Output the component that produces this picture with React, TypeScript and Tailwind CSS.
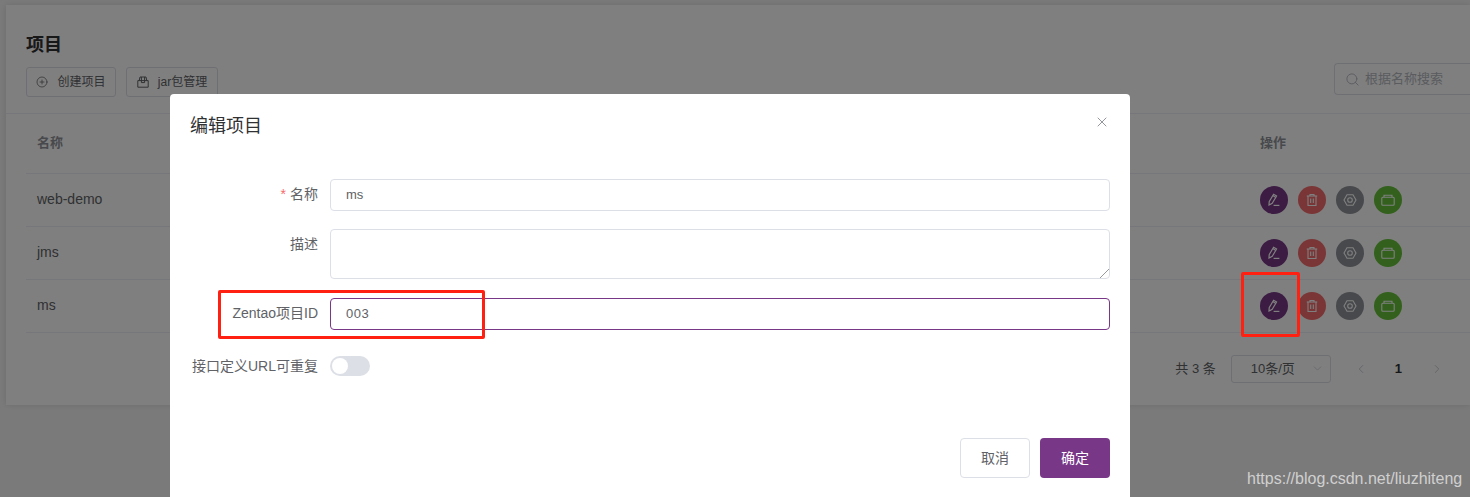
import { CirclePlus, Search, X, ChevronDown, ChevronLeft, ChevronRight } from "lucide-react";

const font = { fontFamily: '"Liberation Sans", "Noto Sans CJK SC", sans-serif' };

const rows = ["web-demo", "jms", "ms"];

function EditIcon() {
  return (
    <svg width="16" height="16" viewBox="0 0 16 16" fill="none" stroke="currentColor" strokeWidth="1.2">
      <path d="M3 13 3.2 9.6 7.6 2.2 10.6 4 6.2 11.4Z" />
      <path d="M6.8 3.6 9.8 5.4" />
      <path d="M7.6 13.4H13.4" />
    </svg>
  );
}

function TrashIcon() {
  return (
    <svg width="16" height="16" viewBox="0 0 16 16" fill="none" stroke="currentColor" strokeWidth="1.1">
      <path d="M2.8 4H13.2" />
      <path d="M6 4V2.5H10V4" />
      <path d="M4 4V13.5H12V4" />
      <path d="M6.7 6.5V11M9.3 6.5V11" />
    </svg>
  );
}

function GearIcon() {
  return (
    <svg width="16" height="16" viewBox="0 0 16 16" fill="none" stroke="currentColor" strokeWidth="1.1">
      <path d="M5 2.8H11L14 8 11 13.2H5L2 8Z" />
      <circle cx="8" cy="8" r="2.3" />
    </svg>
  );
}

function StackIcon() {
  return (
    <svg width="16" height="16" viewBox="0 0 16 16" fill="none" stroke="currentColor" strokeWidth="1.1">
      <path d="M4 5V3.2H12V5" />
      <rect x="1.8" y="5.2" width="12.4" height="8" rx="1" />
    </svg>
  );
}

function BoxIcon() {
  return (
    <svg width="12" height="12" viewBox="0 0 12 12" fill="none" stroke="currentColor" strokeWidth="1">
      <path d="M.8 4.6H11.2V11.2H.8Z" />
      <path d="M2.2 4.6 3 1H9L9.8 4.6" />
      <path d="M4.4 1V6.6H7.6V1" />
    </svg>
  );
}

function Actions() {
  return (
    <div className="flex gap-[10px]">
      <span className="flex h-7 w-7 items-center justify-center rounded-full bg-[#783887] text-white">
        <EditIcon />
      </span>
      <span className="flex h-7 w-7 items-center justify-center rounded-full bg-[#f56c6c] text-white">
        <TrashIcon />
      </span>
      <span className="flex h-7 w-7 items-center justify-center rounded-full bg-[#909399] text-white">
        <GearIcon />
      </span>
      <span className="flex h-7 w-7 items-center justify-center rounded-full bg-[#67c23a] text-white">
        <StackIcon />
      </span>
    </div>
  );
}

function ProjectPage() {
  return (
    <div className="h-[497px] bg-[#f5f5f5] pl-[6px] pt-[5px]">
      <div className="h-[400px] bg-white shadow-[0_0_6px_rgba(0,0,0,0.12)]">
        <div className="flex h-[109px] items-start justify-between border-b border-[#ebeef5] pl-5">
          <div>
            <h1 className="mt-[28px] text-lg font-bold leading-6 text-[#303133]">项目</h1>
            <div className="mt-[10px] flex gap-[10px]">
              <button className="flex h-[30px] w-[90px] items-center justify-center gap-[9px] rounded-[3px] border border-[#dcdfe6] text-xs text-[#606266]">
                <CirclePlus size={12} strokeWidth={1.5} />
                创建项目
              </button>
              <button className="flex h-[30px] w-[92px] items-center justify-center gap-[9px] rounded-[3px] border border-[#dcdfe6] text-xs text-[#606266]">
                <BoxIcon />
                jar包管理
              </button>
            </div>
          </div>
          <div className="mt-[58px] flex h-8 w-[136px] items-center gap-[5px] rounded-l border border-r-0 border-[#dcdfe6] pl-[10px] text-[13px] text-[#b4b8c0]">
            <Search size={15} strokeWidth={1.5} />
            根据名称搜索
          </div>
        </div>
        <div className="pl-5">
          <div className="flex h-[60px] items-center border-b border-[#ebeef5] pb-[2px] pl-[11px] text-[13px] font-bold text-[#909399]">
            <span className="flex-1">名称</span>
            <span className="w-[210px]">操作</span>
          </div>
          {rows.map((r) => (
            <div key={r} className="flex h-[53px] items-center border-b border-[#ebeef5] pl-[11px] text-sm text-[#606266]">
              <span className="flex-1 pb-[2px]">{r}</span>
              <div className="w-[210px]"><Actions /></div>
            </div>
          ))}
          <div className="flex h-[71px] items-center justify-end pr-[26px] text-[13px] text-[#606266]">
            <span>共 3 条</span>
            <div className="ml-[15px] flex h-7 w-[100px] items-center rounded-[3px] border border-[#dcdfe6] pl-[19px] pr-[6px]">
              <span className="flex-1">10条/页</span>
              <ChevronDown size={13} strokeWidth={1.25} className="text-[#c0c4cc]" />
            </div>
            <ChevronLeft size={14} strokeWidth={1.5} className="ml-[23px] text-[#c0c4cc]" />
            <span className="ml-[27px] font-bold text-[#303133]">1</span>
            <ChevronRight size={14} strokeWidth={1.5} className="ml-[28px] text-[#c0c4cc]" />
          </div>
        </div>
      </div>
    </div>
  );
}

function Field({ label, required, children }: { label: string; required?: boolean; children: React.ReactNode }) {
  return (
    <div className="flex">
      <label className="w-[140px] shrink-0 whitespace-nowrap pr-3 text-right text-sm leading-[30px] text-[#606266]">
        {required && <span className="mr-1 text-[#f56c6c]">*</span>}
        {label}
      </label>
      <div className="flex-1">{children}</div>
    </div>
  );
}

function EditDialog() {
  return (
    <div className="absolute left-[170px] top-[94px] h-[420px] w-[960px] rounded-sm bg-white px-5">
      <div className="flex h-[85px] items-start justify-between">
        <h2 className="mt-[20px] text-lg leading-[24px] text-[#303133]">编辑项目</h2>
        <X size={16} strokeWidth={1.25} className="mt-5 text-[#7d8188]" />
      </div>
      <Field label="名称" required>
        <div className="flex h-8 items-center rounded border border-[#dcdfe6] pl-[15px] text-[13px] text-[#606266]">ms</div>
      </Field>
      <div className="mt-[18px]">
        <Field label="描述">
          <div className="h-[50px] rounded border border-[#dcdfe6] bg-[linear-gradient(135deg,transparent_calc(100%-7px),#999_calc(100%-7px),#999_calc(100%-6px),transparent_calc(100%-6px))]" />
        </Field>
      </div>
      <div className="mt-[19px]">
        <Field label="Zentao项目ID">
          <div className="flex h-8 items-center rounded border border-[#783887] pl-[15px] text-[13px] tracking-[0.5px] text-[#606266]">003</div>
        </Field>
      </div>
      <div className="mt-[21px]">
        <Field label="接口定义URL可重复">
          <div className="mt-[5px] flex h-5 w-10 items-center rounded-full bg-[#dcdfe6] pl-[2px]">
            <span className="h-4 w-4 rounded-full bg-white" />
          </div>
        </Field>
      </div>
      <div className="mt-[57px] flex justify-end gap-[10px]">
        <button className="h-10 w-[70px] rounded border border-[#dcdfe6] text-sm text-[#606266]">取消</button>
        <button className="h-10 w-[70px] rounded bg-[#783887] text-sm text-white">确定</button>
      </div>
    </div>
  );
}

export default function App() {
  return (
    <div style={font} className="relative h-[497px] w-[1470px] overflow-hidden">
      <ProjectPage />
      <div className="absolute inset-0 bg-black/50" />
      <EditDialog />
      <div className="absolute left-[218px] top-[290px] h-[49px] w-[267px] rounded-[2px] border-[3px] border-[#ff2012]" />
      <div className="absolute left-[1241px] top-[272px] h-[65px] w-[59px] rounded-[2px] border-[3px] border-[#ff2012]" />
      <div className="absolute left-[1247px] top-[470px] text-base leading-[18px] text-[#d0d0d0]">https://blog.csdn.net/liuzhiteng</div>
    </div>
  );
}
